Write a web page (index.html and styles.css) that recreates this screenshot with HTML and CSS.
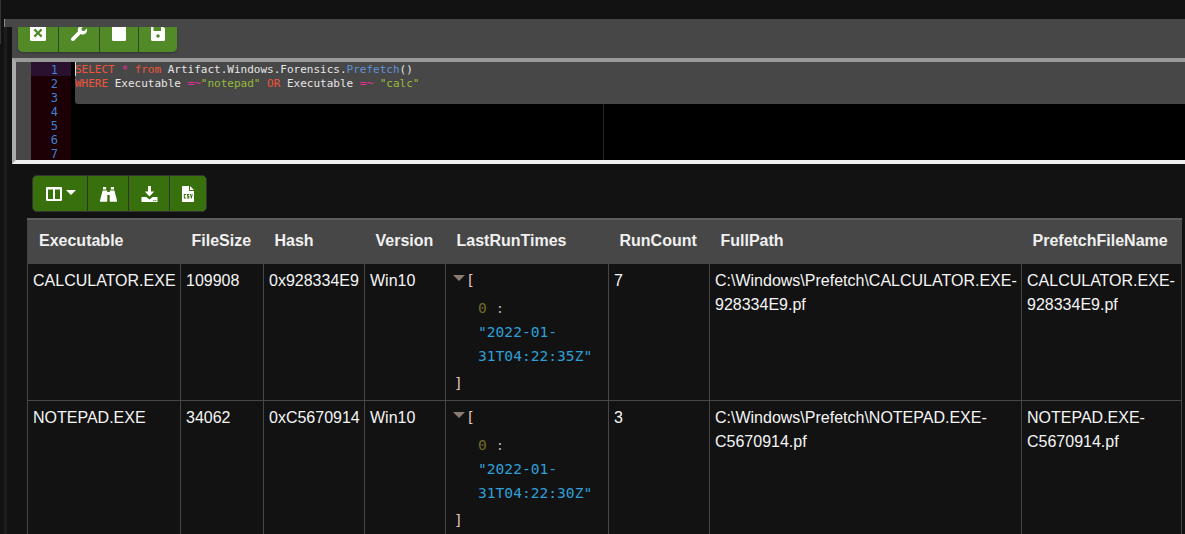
FILE: index.html
```html
<!DOCTYPE html>
<html lang="en">
<head>
<meta charset="utf-8">
<title>Notebook</title>
<link rel="stylesheet" href="styles.css">
</head>
<body>
<div class="page">
  <div class="panel-cap"></div>
  <div class="panel">
    <div class="toolbar-clip">
      <div class="btn-group top-group">
        <button class="btn"><svg class="ic" viewBox="0 0 16 16"><path fill-rule="evenodd" d="M1.5 0h13A1.5 1.5 0 0 1 16 1.5v13a1.5 1.5 0 0 1-1.500 1.500h-13A1.500 1.500 0 0 1 0 14.500v-13A1.500 1.500 0 0 1 1.500 0zM5.200 3.600 3.600 5.200 6.400 8l-2.800 2.800 1.600 1.600L8 9.600l2.800 2.800 1.600-1.600L9.600 8l2.800-2.800-1.600-1.600L8 6.400z"/></svg></button>
        <button class="btn"><svg class="ic" viewBox="0 0 16 16"><path d="M15.800 3.600 13.300 6.100 11 5.700 10.300 3.400 12.800.9A4.300 4.300 0 0 0 7.100 6.300L.6 12.800a1.800 1.800 0 0 0 2.600 2.600L9.700 8.900a4.300 4.300 0 0 0 6.100-5.300z"/></svg></button>
        <button class="btn"><svg class="ic" viewBox="0 0 16 16"><rect width="14" height="16" x="1" rx="1.500"/></svg></button>
        <button class="btn"><svg class="ic" viewBox="0 0 16 16"><path fill-rule="evenodd" d="M2.500 0h9L15 3.500v11a1.500 1.500 0 0 1-1.500 1.500h-11A1.500 1.500 0 0 1 1 14.500v-13A1.500 1.500 0 0 1 2.500 0zM3.500 2v4h7.500V2zM8 9.200a1.800 1.800 0 1 0 0 3.600 1.800 1.800 0 0 0 0-3.600z"/></svg></button>
      </div>
    </div>
    <div class="editor">
      <div class="gutter-pad"></div>
      <div class="gutter">
        <div class="ln ln-active">1</div><div class="ln">2</div><div class="ln">3</div><div class="ln">4</div><div class="ln">5</div><div class="ln">6</div><div class="ln">7</div>
      </div>
      <div class="code">
        <div class="print-margin"></div>
        <div class="selection"></div>
        <div class="code-line"><span class="caret"></span><span class="kw">SELECT</span> <span class="op">*</span> <span class="kw">from</span> Artifact.Windows.Forensics.<span class="fn">Prefetch</span>()</div>
        <div class="code-line"><span class="kw">WHERE</span> Executable <span class="op">=~</span><span class="str">"notepad"</span> <span class="kw">OR</span> Executable <span class="op">=~</span> <span class="str">"calc"</span></div>
      </div>
    </div>
  </div>

  <div class="results">
    <div class="btn-group result-group">
      <button class="btn btn-wide"><svg class="ic-col" viewBox="0 0 16 14"><path fill-rule="evenodd" d="M1 0h14a1 1 0 0 1 1 1v12a1 1 0 0 1-1 1H1a1 1 0 0 1-1-1V1a1 1 0 0 1 1-1zM2 2.500V12h5V2.500zM9 2.500V12h5V2.500z"/></svg><span class="caret-down"></span></button>
      <button class="btn"><svg class="ic-r" viewBox="0 0 17 16"><path d="M3 1h3.200v2.500H3zM10.800 1H14v2.500h-3.200zM2.600 4.500h4.600v1.500h2.600V4.500h4.600L17 14.500a1 1 0 0 1-1 1.200h-5.500a.8.800 0 0 1-.8-.8V9H7.300v5.900a.8.800 0 0 1-.8.8H1a1 1 0 0 1-1-1.200z"/></svg></button>
      <button class="btn"><svg class="ic-r" viewBox="0 0 17 16"><path fill-rule="evenodd" d="M7 0h3v5.500h3.200L8.500 10.500 3.800 5.500H7zM.5 11h4.800l3.200 2.600 3.200-2.600h4.800v5H.5zM12.300 14v1h1v-1zM14.300 14v1h1v-1z"/></svg></button>
      <button class="btn"><svg class="ic-f" viewBox="0 0 12 16"><path fill-rule="evenodd" d="M0 .8A.8.8 0 0 1 .8 0H7v4.200c0 .4.400.8.800.8H12v10.200a.8.800 0 0 1-.8.800H.8a.8.800 0 0 1-.8-.8zM8 0l4 4H8zM1.800 8v4.500h2.400v-1H2.800V9h1.400V8zM5 8v2.700h1.300v.8H5v1h2.300V9.800H6V9h1.300V8zM8 8l.9 4.500h.9L10.700 8h-1l-.4 2.500L8.900 8z"/></svg></button>
    </div>

    <table class="grid">
      <colgroup>
        <col class="c1"><col class="c2"><col class="c3"><col class="c4"><col class="c5"><col class="c6"><col class="c7"><col class="c8">
      </colgroup>
      <thead>
        <tr>
          <th>Executable</th><th>FileSize</th><th>Hash</th><th>Version</th><th>LastRunTimes</th><th>RunCount</th><th>FullPath</th><th>PrefetchFileName</th>
        </tr>
      </thead>
      <tbody>
        <tr>
          <td>CALCULATOR.EXE</td><td>109908</td><td>0x928334E9</td><td>Win10</td>
          <td class="json-cell">
            <div class="json"><span class="tri"></span><span class="br br-open">[</span></div>
            <div class="json json-in json-key"><span class="idx">0</span> <span class="colon">:</span></div>
            <div class="json json-in json-str">"2022-01-<br>31T04:22:35Z"</div>
            <div class="json json-end"><span class="br">]</span></div>
          </td>
          <td>7</td><td>C:\Windows\Prefetch\CALCULATOR.EXE-928334E9.pf</td><td>CALCULATOR.EXE-928334E9.pf</td>
        </tr>
        <tr>
          <td>NOTEPAD.EXE</td><td>34062</td><td>0xC5670914</td><td>Win10</td>
          <td class="json-cell">
            <div class="json"><span class="tri"></span><span class="br br-open">[</span></div>
            <div class="json json-in json-key"><span class="idx">0</span> <span class="colon">:</span></div>
            <div class="json json-in json-str">"2022-01-<br>31T04:22:30Z"</div>
            <div class="json json-end"><span class="br">]</span></div>
          </td>
          <td>3</td><td>C:\Windows\Prefetch\NOTEPAD.EXE-C5670914.pf</td><td>NOTEPAD.EXE-C5670914.pf</td>
        </tr>
      </tbody>
    </table>
  </div>
</div>
</body>
</html>
```
FILE: styles.css
```css
* { box-sizing: border-box; }
html, body { margin: 0; padding: 0; height: 100%; overflow: hidden; }
body {
  background-color: #121212;
  background-image: linear-gradient(#1c1c1c, #1c1c1c), linear-gradient(#333, #333);
  background-repeat: no-repeat;
  background-position: 4px 27px, 0 0;
  background-size: 3px 100%, 1px 44px;
  color: #fff;
  font-family: "Liberation Sans", Arial, sans-serif;
  font-size: 16px;
}
.page { width: 1185px; padding-top: 19px; }
.panel-cap { height: 8px; margin-left: 4px; background: #474747; border-left: 1px solid #8a8a8a; }
.panel { margin-left: 12px; background: #474747; }
.toolbar-clip { height: 31px; padding-left: 6px; overflow: hidden; }
.btn-group { display: flex; }
.btn {
  display: flex; align-items: center; justify-content: center;
  padding: 0; border: 0; border-left: 1px solid #2f4a1c; color: #fff;
}
.btn:first-child { border-left: 0; }
.top-group { width: 159px; height: 25px; background: #528a28; border-radius: 0 0 5px 5px; box-shadow: 0 1px 2px #333; }
.top-group .btn { background: #528a28; width: 39px; height: 25px; align-items: flex-start; }
.top-group .btn:first-child { border-radius: 0 0 0 5px; width: 40px; }
.top-group .btn:nth-child(2) { width: 41px; }
.top-group .btn:last-child { border-radius: 0 0 5px 0; }
.ic { width: 16px; height: 16px; fill: #fff; margin-top: -2px; }
.editor {
  position: relative; display: flex; height: 106px; overflow: hidden;
  border-top: 4px solid #999; border-bottom: 4px solid #f0f0f0; border-left: 4px solid #aaa;
  background: #000;
}
.gutter-pad { width: 15px; background: #474747; }
.gutter { width: 40px; background: #1c0006; }
.ln {
  height: 14px; padding-right: 13px; text-align: right; color: #4080d0;
  font: 12px/16px "DejaVu Sans Mono", monospace;
}
.ln-active { background: #2a1130; }
.code {
  position: relative; flex: 1; padding-left: 4px; color: #e6e6e6;
  font: 11px/16px "DejaVu Sans Mono", monospace;
}
.selection { position: absolute; left: 4px; right: 0; top: 0; height: 42px; background: #474747; border-radius: 0 0 0 3px; }
.print-margin { position: absolute; left: 532px; top: 0; bottom: 0; width: 1px; background: #222; }
.code-line { position: relative; height: 14px; white-space: pre; }
.caret { position: absolute; left: 0; top: 0; width: 1px; height: 14px; background: #ddd; }
.kw { color: #f0543c; }
.op { color: #ee2a9a; }
.fn { color: #5f93d8; }
.str { color: #97bd3a; }
.results { padding: 11px 0 0 27px; }
.result-group { margin-left: 5px; width: 175px; height: 37px; border: 1px solid #333; border-radius: 5px; background: #38700e; overflow: hidden; }
.result-group .btn { background: #38700e; width: 41px; height: 100%; border-left-color: #333; }
.result-group .btn-wide { width: 54px; gap: 4px; padding-left: 2px; }
.result-group .btn:last-child { width: 37px; }
.ic-col { width: 16px; height: 14px; fill: #fff; }
.ic-r { width: 17px; height: 16px; fill: #fff; }
.ic-f { width: 12px; height: 16px; fill: #fff; }
.caret-down { width: 0; height: 0; border-left: 5px solid transparent; border-right: 5px solid transparent; border-top: 5px solid #fff; margin-top: -3px; }
.grid { margin-top: 6px; table-layout: fixed; width: 1154px; border-collapse: collapse; background: #121212; border-top: 2px solid #5e5e5e; border-left: 1px solid #444; }
.c1 { width: 153px; } .c2 { width: 83px; } .c3 { width: 101px; } .c4 { width: 81px; }
.c5 { width: 163px; } .c6 { width: 101px; } .c7 { width: 312px; } .c8 { width: 160px; }
th {
  height: 44px; padding: 0 6px 0 11px; background: #474747; text-align: left; font-weight: 700; color: #f0f0f0; white-space: nowrap;
}
td {
  padding: 5px 3px 0 5px; vertical-align: top; line-height: 24px; border: 1px solid #474747; height: 137px; color: #f5f5f5; overflow-wrap: anywhere;
}
td:first-child { overflow-wrap: normal; }
.json { font: 14.600px/24px "DejaVu Sans Mono", monospace; color: #ddd; padding-left: 3px; position: relative; white-space: nowrap; }
.json-cell { padding-top: 4px; }
.json-in { padding-left: 27px; }
.json-key { margin-top: 4px; }
.json-end { margin-top: 3px; }
.json-str { color: #2f9fd6; }
.idx { color: #6e6a2a; }
.colon { color: #b0a8a0; }
.br { color: #e8c6b4; }
.br-open { margin-left: 12px; }
.tri { position: absolute; left: 2px; top: 7px; width: 0; height: 0; border-left: 6px solid transparent; border-right: 6px solid transparent; border-top: 6px solid #8a7a70; }
```
